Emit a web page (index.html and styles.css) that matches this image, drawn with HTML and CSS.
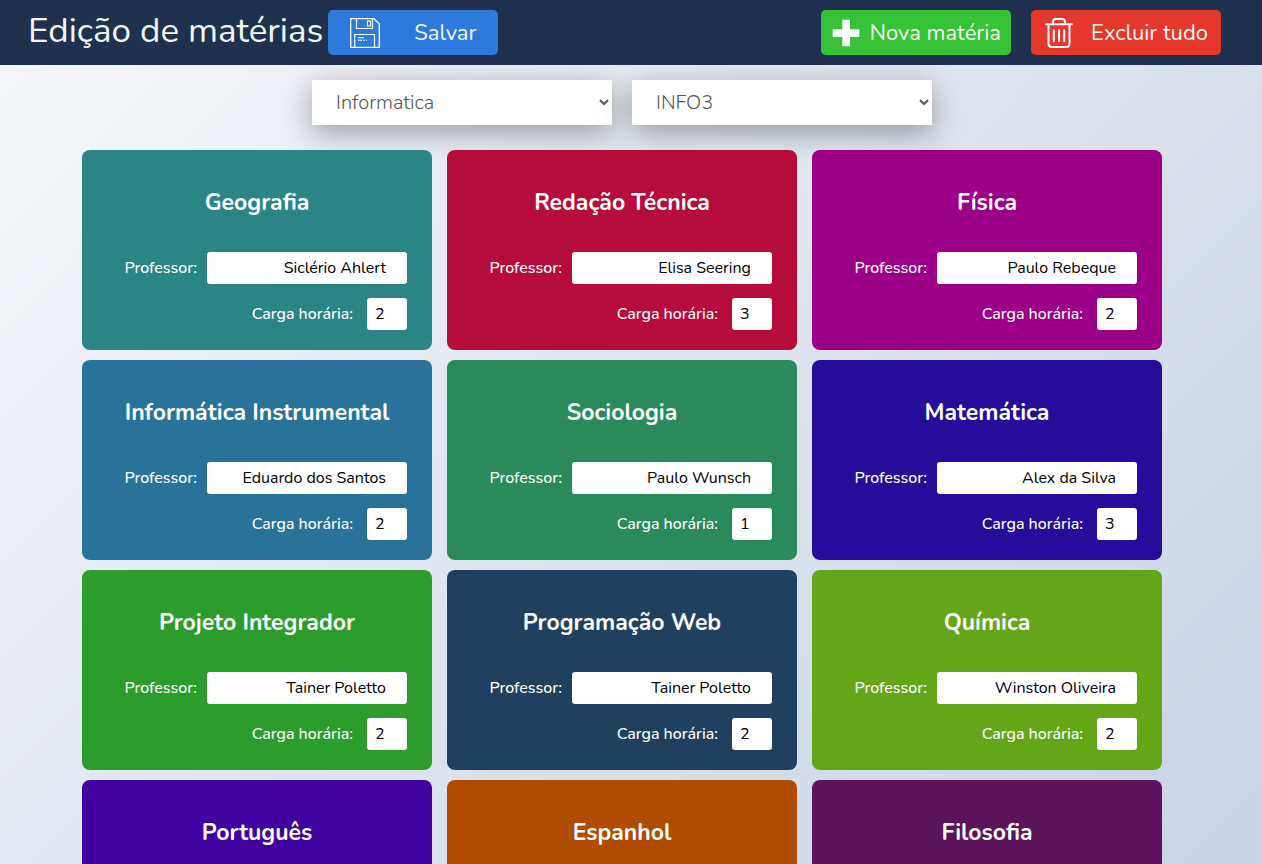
FILE: index.html
```html
<!DOCTYPE html>
<html lang="pt-BR">
<head>
<meta charset="utf-8">
<meta name="viewport" content="width=device-width, initial-scale=1">
<title>Edição de matérias</title>
<link rel="stylesheet" href="styles.css">
</head>
<body>
<header class="topbar">
  <h1 class="topbar-title">Edição de matérias</h1>
  <button class="btn btn-save" type="button">
    <svg class="icon" viewBox="0 0 30 30" width="30" height="30" fill="none" stroke="currentColor" aria-hidden="true">
      <path d="M.7 .7H24L29.3 6V29.3H.7Z" stroke-width="1.3"/>
      <path d="M6.5 .7V10.5H22.5V.7M4.7 29V16.5H24.5V29" stroke-width="1.2"/>
      <path d="M17.5 3H20.5V8H17.5Z" stroke-width="1.2"/>
      <path d="M8 19.7H14M8 22.2H12M13 22.2H15M16 22.2H17" stroke-width="1"/>
    </svg>
    <span>Salvar</span>
  </button>
  <div class="topbar-actions">
    <button class="btn btn-new" type="button">
      <svg class="icon" viewBox="0 0 28 28" width="28" height="28" fill="currentColor" aria-hidden="true"><path d="M10.3 .7H18V10.2H27.3V18H18V27.3H10.3V18H.7V10.2H10.3Z"/></svg>
      <span>Nova matéria</span>
    </button>
    <button class="btn btn-clear" type="button">
      <svg class="icon" viewBox="0 0 28 30" width="28" height="30" fill="none" stroke="currentColor" stroke-width="2" aria-hidden="true">
        <path d="M.4 6.2H27.6M8 6V4Q8 1 11 1H17Q20 1 20 4V6M3.5 6V25.5Q3.5 29 7 29H21Q24.5 29 24.5 25.5V6"/>
        <path d="M8.8 12V23.2M14 12V23.2M19.2 12V23.2" stroke-linecap="round"/>
      </svg>
      <span>Excluir tudo</span>
    </button>
  </div>
</header>
<main class="content">
  <div class="filters">
    <select class="filter" aria-label="Curso"><option>Informatica</option></select>
    <select class="filter" aria-label="Turma"><option>INFO3</option></select>
  </div>
  <div class="subjects">
    <section class="card teal"><h2 class="card-title">Geografia</h2>
      <label class="field">Professor:<input class="teacher" value="Siclério Ahlert"></label>
      <label class="field field-hours">Carga horária:<input class="hours" value="2"></label></section>
    <section class="card crimson"><h2 class="card-title">Redação Técnica</h2>
      <label class="field">Professor:<input class="teacher" value="Elisa Seering"></label>
      <label class="field field-hours">Carga horária:<input class="hours" value="3"></label></section>
    <section class="card magenta"><h2 class="card-title">Física</h2>
      <label class="field">Professor:<input class="teacher" value="Paulo Rebeque"></label>
      <label class="field field-hours">Carga horária:<input class="hours" value="2"></label></section>
    <section class="card blue"><h2 class="card-title">Informática Instrumental</h2>
      <label class="field">Professor:<input class="teacher" value="Eduardo dos Santos"></label>
      <label class="field field-hours">Carga horária:<input class="hours" value="2"></label></section>
    <section class="card sea"><h2 class="card-title">Sociologia</h2>
      <label class="field">Professor:<input class="teacher" value="Paulo Wunsch"></label>
      <label class="field field-hours">Carga horária:<input class="hours" value="1"></label></section>
    <section class="card indigo"><h2 class="card-title">Matemática</h2>
      <label class="field">Professor:<input class="teacher" value="Alex da Silva"></label>
      <label class="field field-hours">Carga horária:<input class="hours" value="3"></label></section>
    <section class="card green"><h2 class="card-title">Projeto Integrador</h2>
      <label class="field">Professor:<input class="teacher" value="Tainer Poletto"></label>
      <label class="field field-hours">Carga horária:<input class="hours" value="2"></label></section>
    <section class="card navy"><h2 class="card-title">Programação Web</h2>
      <label class="field">Professor:<input class="teacher" value="Tainer Poletto"></label>
      <label class="field field-hours">Carga horária:<input class="hours" value="2"></label></section>
    <section class="card lime"><h2 class="card-title">Química</h2>
      <label class="field">Professor:<input class="teacher" value="Winston Oliveira"></label>
      <label class="field field-hours">Carga horária:<input class="hours" value="2"></label></section>
    <section class="card violet"><h2 class="card-title">Português</h2></section>
    <section class="card orange"><h2 class="card-title">Espanhol</h2></section>
    <section class="card plum"><h2 class="card-title">Filosofia</h2></section>
  </div>
</main>
</body>
</html>
```
FILE: styles.css
```css
* { box-sizing: border-box; }

body {
  margin: 0;
  height: 100vh;
  display: flex;
  flex-direction: column;
  font-family: Nunito, "Open Sans", sans-serif;
  font-size: 16px;
  background: linear-gradient(135deg, #f5f7fa 0%, #c3cfe2 110%);
}

button, input, select { font-family: inherit; }

.topbar {
  flex: none;
  display: flex;
  align-items: center;
  gap: 5px;
  min-height: 65px;
  padding: 0 41px 0 28px;
  background: #1f314f;
}

.topbar-title {
  margin: 0;
  padding-bottom: 4px;
  font-size: 35px;
  line-height: 44px;
  font-weight: 400;
  color: #f5f5f5;
  white-space: nowrap;
}

.topbar-actions {
  display: flex;
  gap: 20px;
  margin-left: auto;
}

.btn {
  display: flex;
  align-items: center;
  justify-content: space-between;
  width: 190px;
  height: 45px;
  border: 0;
  border-radius: 5px;
  font-size: 22px;
  color: #fff;
  white-space: nowrap;
  cursor: pointer;
}

.icon { flex: none; }
.btn span { color: #f5f5f5; }
.btn-save { width: 170px; padding: 0 22px; background: #2d7adc; }
.btn-new { padding: 0 10px 0 11px; background: #37c337; }
.btn-clear { padding: 0 13px 0 14px; background: #e5372c; }

.content {
  flex: 1;
  min-height: 0;
  padding: 15px 18px 20px 0;
  overflow-y: auto;
  scrollbar-width: none;
}

.filters {
  display: flex;
  justify-content: center;
  gap: 20px;
  margin-bottom: 25px;
}

.filter {
  width: 300px;
  height: 45px;
  padding: 0 1px 0 20px;
  border: 0;
  border-radius: 0;
  background: #fff;
  font-size: 20px;
  font-weight: 300;
  color: #555;
  box-shadow: 0 8px 30px rgba(0, 0, 0, 0.35);
}

.subjects {
  position: relative;
  display: grid;
  grid-template-columns: repeat(auto-fill, 350px);
  justify-content: center;
  gap: 10px 15px;
}

.card {
  display: flex;
  flex-direction: column;
  min-height: 200px;
  padding: 37px 25px 20px;
  border-radius: 8px;
  color: #fff;
}

.card-title {
  margin: 0 0 33px;
  font-size: 23px;
  line-height: 32px;
  font-weight: 700;
  text-align: center;
}

.field {
  display: flex;
  align-items: center;
  justify-content: flex-end;
  gap: 10px;
  margin-bottom: 14px;
  font-weight: 500;
}

.field-hours { gap: 14px; margin-bottom: 0; }

.teacher, .hours {
  height: 32px;
  border: 0;
  border-radius: 3px;
  background: #fff;
  color: #000;
  font-size: 16px;
}

.teacher { width: 200px; padding: 0 21px; text-align: right; }
.hours { width: 40px; padding: 0 8px; }

.teal { background: #2b8584; }
.crimson { background: #b60c3b; }
.magenta { background: #9c0087; }
.blue { background: #29739a; }
.sea { background: #2b8a5c; }
.indigo { background: #270c9c; }
.green { background: #2c9c2c; }
.navy { background: #1f415f; }
.lime { background: #63a618; }
.violet { background: #4100a0; }
.orange { background: #b14b00; }
.plum { background: #5d135b; }
```
